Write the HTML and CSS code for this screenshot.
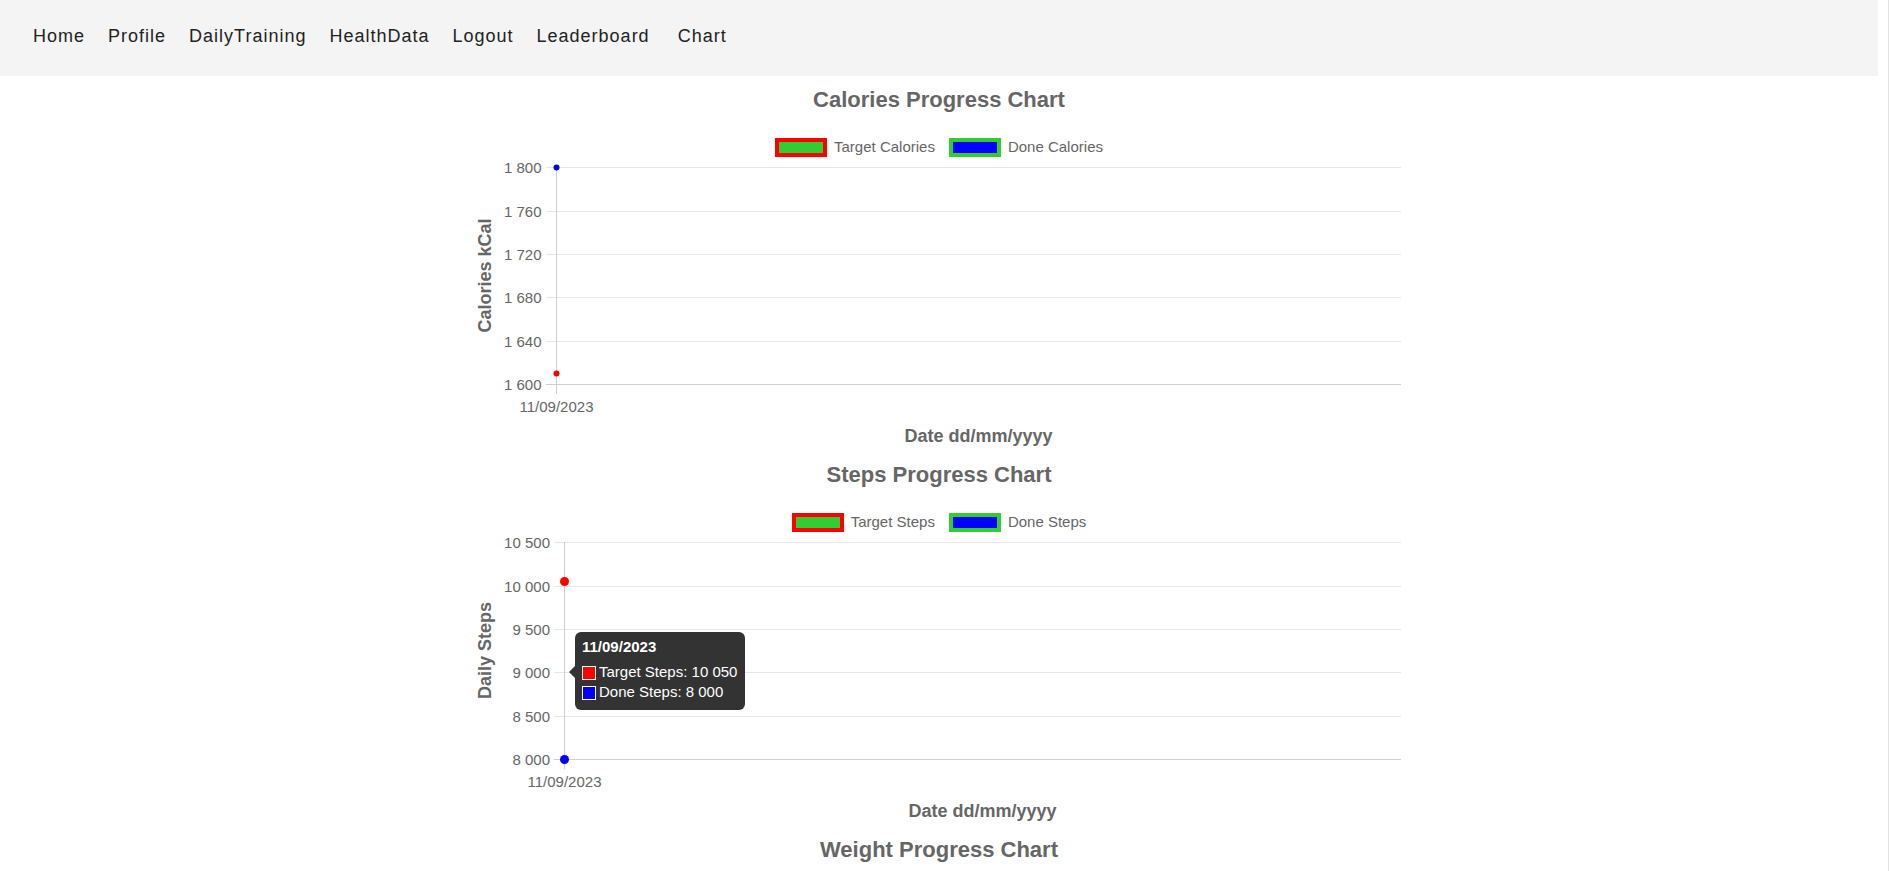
FILE: index.html
```html
<!DOCTYPE html>
<html lang="en">
<head>
<meta charset="utf-8">
<title>Charts</title>
<link rel="stylesheet" href="styles.css">
</head>
<body>
<div class="page">
  <nav class="nav">
    <a class="nav-link" href="#">Home</a>
    <a class="nav-link" href="#">Profile</a>
    <a class="nav-link" href="#">DailyTraining</a>
    <a class="nav-link" href="#">HealthData</a>
    <a class="nav-link" href="#">Logout</a>
    <a class="nav-link" href="#">Leaderboard</a>
    <a class="nav-link nav-link-last" href="#">Chart</a>
  </nav>

  <section class="chart">
    <h2 class="chart-title">Calories Progress Chart</h2>
    <div class="legend">
      <div class="legend-item"><span class="legend-box box-target"></span><span class="legend-text">Target Calories</span></div>
      <div class="legend-item"><span class="legend-box box-done"></span><span class="legend-text">Done Calories</span></div>
    </div>
    <svg class="plot" width="936" height="294" viewBox="0 0 936 294">
      <g class="grid">
        <line x1="75" x2="930" y1="10.5" y2="10.5"/>
        <line x1="75" x2="930" y1="54.5" y2="54.5"/>
        <line x1="75" x2="930" y1="97.5" y2="97.5"/>
        <line x1="75" x2="930" y1="140.5" y2="140.5"/>
        <line x1="75" x2="930" y1="184.5" y2="184.5"/>
      </g>
      <g class="axis">
        <line x1="75" x2="930" y1="227.5" y2="227.5"/>
        <line x1="85.5" x2="85.5" y1="10" y2="237"/>
      </g>
      <g class="ticks" text-anchor="end">
        <text x="70.5" y="15.5">1 800</text>
        <text x="70.5" y="59.5">1 760</text>
        <text x="70.5" y="102.5">1 720</text>
        <text x="70.5" y="145.5">1 680</text>
        <text x="70.5" y="189.5">1 640</text>
        <text x="70.5" y="232.5">1 600</text>
      </g>
      <text class="ticks" x="85.5" y="254.5" text-anchor="middle">11/09/2023</text>
      <text class="axis-title" x="507.5" y="284.5" text-anchor="middle">Date dd/mm/yyyy</text>
      <text class="axis-title" text-anchor="middle" transform="translate(19.5 118.5) rotate(-90)">Calories kCal</text>
      <circle cx="85.5" cy="10.5" r="3" fill="#0000ff"/>
      <circle cx="85.5" cy="216.5" r="3" fill="#ff0000"/>
    </svg>
  </section>

  <section class="chart">
    <h2 class="chart-title">Steps Progress Chart</h2>
    <div class="legend">
      <div class="legend-item"><span class="legend-box box-target"></span><span class="legend-text">Target Steps</span></div>
      <div class="legend-item"><span class="legend-box box-done"></span><span class="legend-text">Done Steps</span></div>
    </div>
    <svg class="plot" width="936" height="294" viewBox="0 0 936 294">
      <g class="grid">
        <line x1="83" x2="930" y1="10.5" y2="10.5"/>
        <line x1="83" x2="930" y1="54.5" y2="54.5"/>
        <line x1="83" x2="930" y1="97.5" y2="97.5"/>
        <line x1="83" x2="930" y1="140.5" y2="140.5"/>
        <line x1="83" x2="930" y1="184.5" y2="184.5"/>
      </g>
      <g class="axis">
        <line x1="83" x2="930" y1="227.5" y2="227.5"/>
        <line x1="93.5" x2="93.5" y1="10" y2="237"/>
      </g>
      <g class="ticks" text-anchor="end">
        <text x="79" y="15.5">10 500</text>
        <text x="79" y="59.5">10 000</text>
        <text x="79" y="102.5">9 500</text>
        <text x="79" y="145.5">9 000</text>
        <text x="79" y="189.5">8 500</text>
        <text x="79" y="232.5">8 000</text>
      </g>
      <text class="ticks" x="93.5" y="254.5" text-anchor="middle">11/09/2023</text>
      <text class="axis-title" x="511.5" y="284.5" text-anchor="middle">Date dd/mm/yyyy</text>
      <text class="axis-title" text-anchor="middle" transform="translate(19.5 118.5) rotate(-90)">Daily Steps</text>
      <circle cx="93.5" cy="49.5" r="4.5" fill="#ff0000"/>
      <circle cx="93.5" cy="227.5" r="4.5" fill="#0000ff"/>
    </svg>
    <div class="tooltip">
      <div class="tooltip-title">11/09/2023</div>
      <div class="tooltip-row"><span class="tooltip-swatch swatch-red"></span>Target Steps: 10 050</div>
      <div class="tooltip-row"><span class="tooltip-swatch swatch-blue"></span>Done Steps: 8 000</div>
    </div>
  </section>

  <section class="chart">
    <h2 class="chart-title">Weight Progress Chart</h2>
    <div class="legend">
      <div class="legend-item"><span class="legend-box box-target"></span><span class="legend-text">Target Weight</span></div>
      <div class="legend-item"><span class="legend-box box-done"></span><span class="legend-text">Done Weight</span></div>
    </div>
  </section>
</div>
</body>
</html>
```

FILE: styles.css
```css
html {
  overflow: hidden;
  background: #ffffff;
}

body {
  margin: 0;
  width: 1888px;
  min-height: 871px;
  border-right: 1px solid #e2e2e2;
  font-family: "Liberation Sans", Arial, sans-serif;
  color: #666666;
}

.page {
  width: 1878px;
}

.nav {
  display: flex;
  align-items: center;
  gap: 23px;
  height: 76px;
  box-sizing: border-box;
  padding: 0 0 4px 33px;
  background: #f4f4f4;
}

.nav-link {
  font-size: 18px;
  line-height: 21px;
  letter-spacing: 1px;
  color: #222222;
  text-decoration: none;
}

.nav-link-last {
  margin-left: 5px;
}

.chart {
  position: relative;
  box-sizing: border-box;
  width: 936px;
  height: 375px;
  margin: 0 auto;
  padding-top: 11px;
}

.chart-title {
  margin: 0;
  font-size: 22px;
  line-height: 26px;
  font-weight: bold;
  text-align: center;
  color: #666666;
}

.legend {
  display: flex;
  justify-content: center;
  align-items: center;
  gap: 14px;
  height: 20px;
  margin-top: 24px;
}

.legend-item {
  display: flex;
  align-items: center;
  gap: 7px;
}

.legend-box {
  display: block;
  width: 44px;
  height: 11px;
  border: 4px solid;
}

.box-target {
  background: #32cd32;
  border-color: #ff0000;
}

.box-done {
  background: #0000ff;
  border-color: #32cd32;
}

.legend-text {
  font-size: 15px;
  line-height: 18px;
  color: #666666;
}

.plot {
  display: block;
}

.grid line {
  stroke: #e6e6e6;
  stroke-width: 1;
}

.axis line {
  stroke: #cfcfcf;
  stroke-width: 1;
}

.ticks {
  font-family: "Liberation Sans", Arial, sans-serif;
  font-size: 15px;
  fill: #666666;
}

.axis-title {
  font-family: "Liberation Sans", Arial, sans-serif;
  font-size: 18px;
  font-weight: bold;
  fill: #666666;
}

.tooltip {
  position: absolute;
  left: 104px;
  top: 181px;
  padding: 6px 8px 8px 7px;
  background: #333333;
  border-radius: 6px;
  color: #ffffff;
  font-size: 15px;
}

.tooltip::before {
  content: "";
  position: absolute;
  left: -6px;
  top: 34px;
  border-top: 6px solid transparent;
  border-bottom: 6px solid transparent;
  border-right: 6px solid #333333;
}

.tooltip-title {
  font-weight: bold;
  line-height: 17px;
  margin-bottom: 7px;
}

.tooltip-row {
  display: flex;
  align-items: center;
  gap: 3px;
  line-height: 20px;
  white-space: nowrap;
}

.tooltip-swatch {
  display: block;
  width: 12px;
  height: 12px;
  border: 1px solid #ffffff;
  margin-top: 2px;
}

.swatch-red {
  background: #ff0000;
}

.swatch-blue {
  background: #0000ff;
}
```
